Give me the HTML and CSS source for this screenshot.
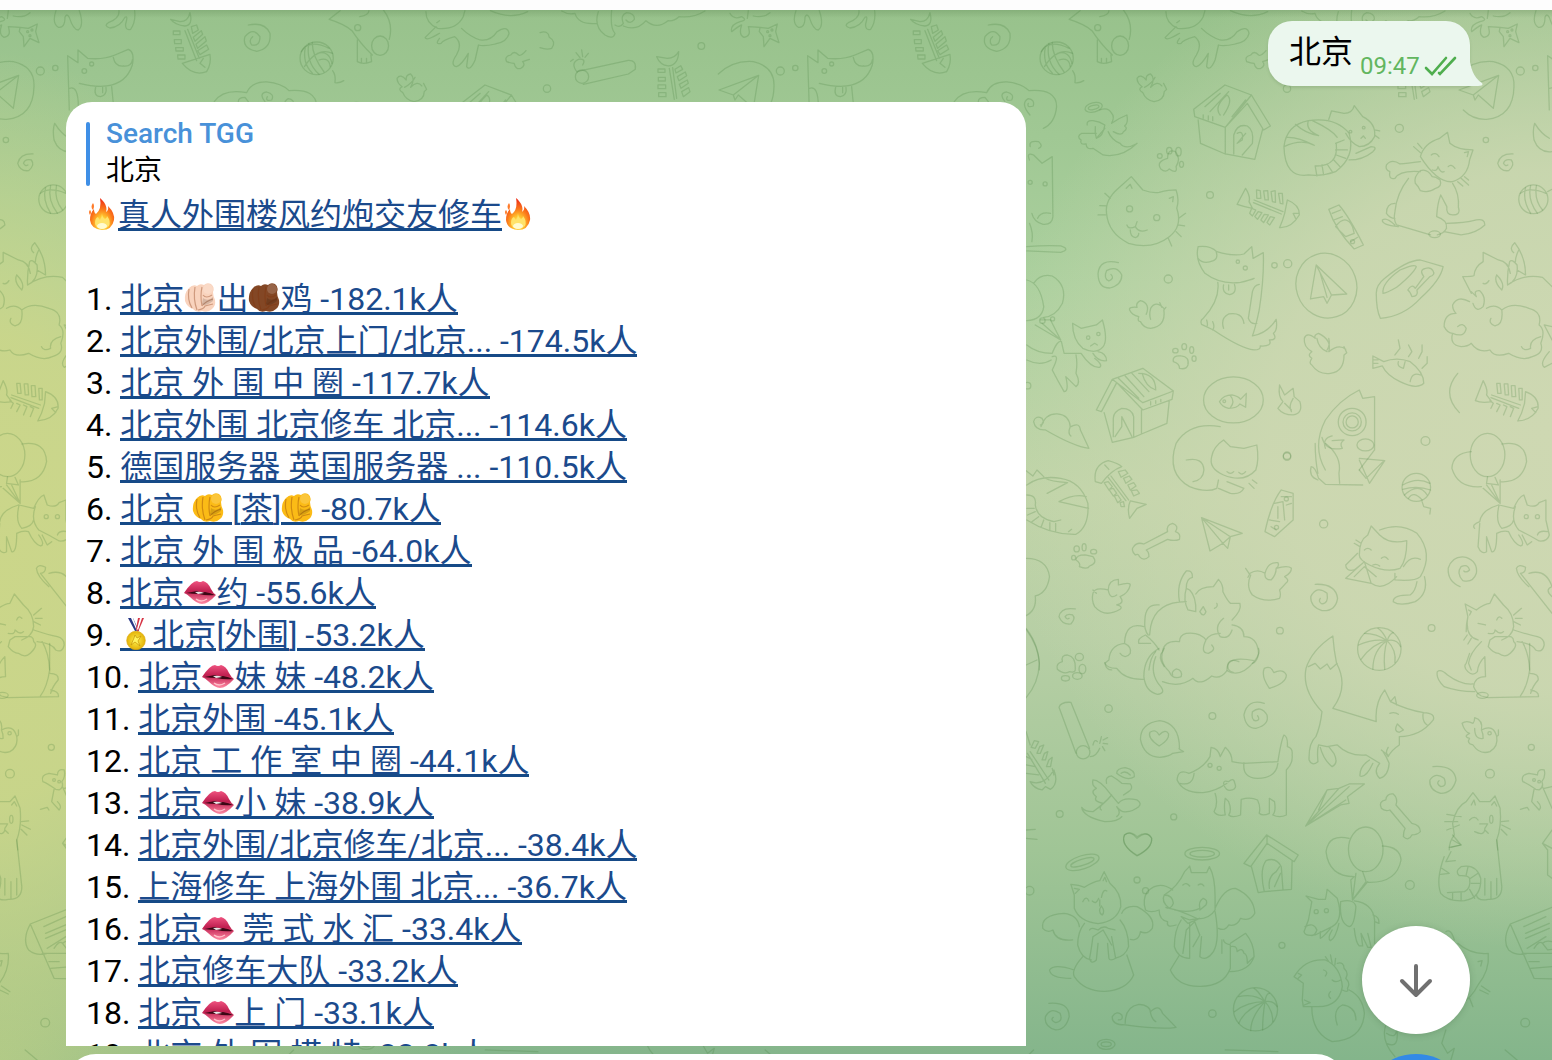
FILE: index.html
```html
<!DOCTYPE html>
<html lang="zh-CN">
<head>
<meta charset="utf-8">
<title>Search TGG</title>
<link rel="stylesheet" href="styles.css">
</head>
<body>
<svg class="defs" width="0" height="0" aria-hidden="true">
  <defs>
    <radialGradient id="gFire" cx=".5" cy=".8" r=".75"><stop offset="0" stop-color="#fff3a0"/><stop offset=".3" stop-color="#ffc52e"/><stop offset=".6" stop-color="#fb7a1b"/><stop offset="1" stop-color="#ee3016"/></radialGradient>
    <linearGradient id="gLip" x1="0" y1="0" x2="0" y2="1"><stop offset="0" stop-color="#ef5380"/><stop offset=".45" stop-color="#c01f50"/><stop offset="1" stop-color="#ff8ba4"/></linearGradient>
    <radialGradient id="gMedal"><stop offset="0" stop-color="#fff04c"/><stop offset="1" stop-color="#e3b208"/></radialGradient>
    <symbol id="fire" viewBox="0 0 32 32"><path fill="url(#gFire)" d="M14 0C21 6 21 11 20 14Q23 12 22 8Q29 15 28 22Q26 32 16 32Q5 31 4 22Q4 15 8 11Q8 15 10 16Q16 11 14 0Z"/><path fill="#ff7a28" d="M7 5Q9 8 7 12Q4 9 7 5ZM4 12Q6 14 4 17Q2 14 4 12Z"/><path fill="#ffe36a" d="M16 15Q16 19 19 21Q21 20 21 18Q25 23 23 28Q20 31 16 31Q9 30 9 25Q9 20 12 19Q13 21 14 22Q16 19 16 15Z"/><ellipse cx="16" cy="28" rx="5" ry="3" fill="#fffbd0"/></symbol>
    <symbol id="fist" viewBox="0 0 32 32"><path fill="currentColor" d="M5 6Q9 2 13 4Q16 1 20 3Q23 0 27 2Q31 5 29 10Q29 14 31 18Q32 24 28 27Q24 31 18 29Q12 31 9 27Q3 25 1 19Q0 11 5 6Z"/><path class="fist-line" d="M5 7Q3 18 8 26M11 5Q9 17 13 28M18 5Q16 14 18 24M19 13Q22 17 28 13M18 24Q22 19 29 17M14 28Q20 27 21 24L29 22"/><circle cx="24" cy="7" r="5" fill="#fff" opacity=".16"/><path d="M19 16Q24 20 29 15V19Q21 25 18 22Z" opacity=".14"/></symbol>
    <symbol id="lips" viewBox="0 0 32 32"><path fill="url(#gLip)" d="M0 17Q8 5 13 5Q16 7 19 5Q24 6 27 13Q29 17 32 19Q24 28 18 28Q13 28 6 21Q3 18 0 17Z"/><path fill="#3c0715" d="M2 17Q8 16 13 15Q17 17 21 16Q27 17 31 19Q22 20 15 18Q9 18 2 17Z"/><path fill="#fff" opacity=".9" d="M11 16Q16 15 20 17L14 18Z"/><path d="M12 23Q17 27 23 23" stroke="#ffc1ca" fill="none" stroke-width="1.5"/></symbol>
    <symbol id="medal" viewBox="0 0 32 32"><path fill="#273786" d="M8 0H13L19 13H15Z"/><path fill="#fff" d="M11 0H13L18 13H17Z"/><path fill="#d63445" d="M18 0L16 11L18 14L24 0Z"/><path fill="#fff" d="M20 0L17 11L18 12L22 0Z"/><circle cx="16" cy="22.500" r="9.300" fill="url(#gMedal)" stroke="#dca90b" stroke-width=".7"/><path d="M11 27L14 20L15 17L17 20L21 18L18 23L20 28L15 24Z" fill="#fff35c" stroke="#c69207" stroke-width=".7"/></symbol>

    <!-- pattern row that also continues past the right end of the tile -->
    <g id="tileHead" transform="translate(540 0) scale(.3333)">
      <path d="M570 40Q580 60 605 50Q625 60 600 65Q570 75 575 95Q600 75 605 75Q595 105 612 112Q635 110 625 80L660 82M625 32L622 55M690 38Q670 55 640 48M660 82L685 85L712 72L707 95L717 128L690 115L672 140L670 110L658 95Z"/>
      <circle cx="683" cy="95" r="3"/><circle cx="696" cy="90" r="3"/><circle cx="690" cy="107" r="3"/>
      <path d="M768 32Q755 70 775 82Q795 85 795 52Q800 38 808 52Q820 90 835 90Q850 80 842 45L838 32M957 32Q960 55 925 68Q910 78 930 84Q960 82 975 52Q985 45 977 72Q975 92 992 88Q1008 65 1004 32"/>
      <path d="M535 222Q580 180 640 185Q705 200 702 260Q700 350 620 358Q580 360 550 330M537 270L656 226L640 325L595 285L585 300L580 285ZM656 226L580 285"/>
      <circle cx="721" cy="213" r="12"/><circle cx="766" cy="204" r="8"/>
      <path d="M808 330L803 167L834 188V150L863 175Q910 180 945 165L985 148Q1005 155 997 195Q980 250 920 258Q885 262 838 250M940 172Q945 200 970 198Q995 200 997 180M887 262Q880 290 902 290Q922 285 918 262M908 262V278M808 265Q835 255 835 320M935 260L942 330"/>
      <circle cx="875" cy="192" r="6"/><circle cx="853" cy="213" r="7"/>
      <path d="M1112 58L1140 65Q1165 65 1170 38Q1180 75 1155 78Q1125 75 1112 58ZM1155 92L1190 182M1163 88L1198 175M1120 93H1140V104H1120ZM1123 119H1144V131H1124ZM1127 143H1150V153H1128ZM1133 165H1155V177H1134ZM1174 80L1190 75L1195 90L1178 100ZM1180 112L1204 92L1208 103L1185 124ZM1188 133L1215 110L1219 123L1193 145ZM1193 152L1220 135L1226 148L1200 164ZM1147 190L1230 163Q1235 190 1220 215Q1180 230 1147 190M1210 175L1200 190L1215 202"/>
      <path d="M1345 75Q1395 65 1410 100Q1415 145 1370 154Q1325 145 1335 110Q1360 80 1380 110Q1380 140 1355 135Q1345 120 1358 110"/>
      <path d="M1243 305Q1270 265 1340 278Q1355 245 1400 246Q1445 250 1467 272Q1550 265 1550 320Q1545 370 1510 385M1395 305Q1375 280 1400 276Q1425 282 1415 300Q1395 305 1402 290M1470 345Q1440 310 1465 296Q1485 298 1480 318Q1460 325 1465 310M1315 305Q1315 292 1335 292L1345 305"/>
    </g>

    <g id="tile">
      <use href="#tileHead"/>
      <g transform="translate(1280 0) scale(.3333)">
        <path d="M65 33Q85 45 105 40Q115 75 170 70M175 35Q160 80 195 105Q220 120 225 100Q210 85 215 30M225 75Q240 85 250 70Q240 45 260 38Q285 40 283 58Q270 75 258 60M250 78Q290 95 318 62Q350 90 384 62Q400 65 417 50Q460 55 495 33"/>
        <path d="M0 98Q25 90 28 112Q50 125 35 145Q20 150 0 143"/>
        <circle cx="21" cy="266" r="11"/><circle cx="484" cy="138" r="10"/>
        <circle cx="126" cy="230" r="20"/><path d="M110 215L265 181Q290 180 286 208L265 222L130 253M112 217Q90 190 115 178Q140 175 128 195M120 173L108 158M128 170L125 150M135 172L145 160M100 178L92 184"/>
        <path d="M350 170L382 175Q405 175 416 155Q415 195 385 198Q360 195 350 170ZM388 205L403 298M398 203L410 295M354 207H375V217H354ZM355 232H376V243H355ZM354 255H377V266H354ZM356 278H378V290H356ZM405 208L422 197L428 208L408 219ZM412 230L436 216L440 227L417 242ZM418 253L442 240L445 250L423 265ZM425 275L446 263L450 275L430 290Z"/>
      </g>

      <g transform="translate(1020 0) scale(.3393 .3333)">
        <path d="M177 32L145 58Q190 72 212 92Q240 135 272 165M262 32Q262 45 235 50M305 30Q335 70 322 118M228 120V185Q245 195 270 185L268 165M240 188V175M255 190V175"/>
        <ellipse cx="295" cy="137" rx="25" ry="29"/><circle cx="229" cy="83" r="9"/>
        <circle cx="108" cy="175" r="49"/><path d="M75 140Q65 190 95 219M85 130Q75 185 115 223M95 127Q95 170 130 216M63 155Q85 115 145 145M72 200Q110 140 155 160M110 160Q145 150 153 190M115 180Q145 170 148 200M155 212Q165 225 162 248Q175 250 188 242"/>
        <path d="M430 35Q430 70 465 85Q520 90 540 50L545 32M535 85Q560 110 590 120Q620 125 640 95Q670 75 675 100Q670 125 635 132Q600 140 585 135L575 180Q560 215 550 200L555 160Q535 195 520 200Q500 195 520 165Q540 130 515 110Q480 120 475 130Q455 135 470 115M460 80Q430 110 428 112Q430 125 470 100M620 32Q680 60 730 35M470 62L462 68"/>
        <path d="M725 152Q710 170 703 165Q690 150 680 165Q660 170 668 185Q680 190 690 190Q695 210 710 205Q725 195 715 185L735 178"/>
        <path d="M418 258Q405 240 385 262Q400 235 385 222Q370 225 372 240Q355 220 345 235Q345 250 360 260Q345 268 362 278Q370 300 395 305Q425 300 425 275L432 268L423 250M367 262Q390 250 398 232"/>
        <ellipse cx="217" cy="322" rx="26" ry="14" transform="rotate(-14 217 322)"/><ellipse cx="217" cy="322" rx="16" ry="6" transform="rotate(-14 217 322)"/>
        <path d="M235 330Q260 320 270 340Q280 350 270 370Q290 355 315 345Q320 370 308 378Q320 385 305 395Q300 410 275 395M198 375Q195 360 215 362Q235 365 250 375Q245 410 225 415Q220 400 222 380M225 400Q200 400 182 400Q165 410 180 420Q175 435 195 432Q195 450 215 445L245 465Q300 475 345 430M260 395Q270 420 295 430Q310 450 342 432M225 415L250 385"/>
        <path d="M512 328L604 255L682 285L738 378L718 390L670 310L605 382L515 350ZM605 382L682 285M525 360L532 430L605 462V382M605 462L692 478L715 388M630 462V405Q640 370 670 378Q690 390 685 430L655 465M545 320L590 280M560 335L615 275M590 345Q570 320 610 285Q630 300 600 345M625 350L665 300M640 400Q660 390 655 420L640 430L665 400M540 345V355M555 348V360M568 350V362"/>
        <path d="M458 455Q435 445 435 475Q400 485 415 507Q430 520 440 507Q465 525 460 500Q475 475 458 455Z"/><ellipse cx="440" cy="452" rx="8" ry="10"/><ellipse cx="467" cy="455" rx="8" ry="13"/><ellipse cx="412" cy="468" rx="7" ry="7"/><ellipse cx="476" cy="493" rx="6" ry="9"/>
        <path d="M850 525Q780 535 778 440Q785 375 850 362Q930 350 970 400Q990 470 930 515Q890 530 850 525M812 373Q840 400 880 407Q840 390 850 362M778 440Q830 415 867 436M785 412Q820 410 867 436M862 362Q920 390 935 412M910 358L918 333L955 340Q980 340 985 317L1010 350Q1050 370 1045 410Q1030 440 1000 440Q975 430 960 400M870 498L875 528M890 495L895 525M905 492L920 515M925 480L945 502M932 465L960 475M930 450L965 450M930 430L955 420M870 498Q940 500 932 430M970 480Q1010 480 1040 455Q1055 440 1035 440L990 460M1045 390L1060 393M1045 405L1058 415M1005 415L1012 408L1018 415"/><circle cx="974" cy="395" r="4"/><circle cx="1013" cy="383" r="4"/>
        <circle cx="1118" cy="385" r="12"/><circle cx="560" cy="585" r="10"/><circle cx="1373" cy="420" r="8"/>
        <path d="M255 640Q250 600 290 565L328 530L362 570Q390 580 410 577Q440 570 460 570Q470 600 462 625Q480 680 440 710Q390 750 320 730Q260 700 255 640M313 565L325 553L330 565M440 595L452 590L450 605M315 675Q320 690 340 680Q350 700 375 690M345 665L340 680M325 690Q325 710 340 713Q350 710 350 700M250 580L266 595M235 617L255 618M230 645L252 645M468 655L488 640M465 675L485 678M460 695L475 710M437 715L447 738"/><circle cx="323" cy="627" r="9"/><circle cx="403" cy="653" r="9"/>
        <path d="M640 613L665 565Q680 590 675 605L685 625Q660 620 640 613M690 600L775 635M688 608L770 642M697 570L708 572L710 595L698 595ZM718 573L730 572L732 600L722 600ZM740 575L752 572L753 607L744 605ZM762 580L773 580L775 612L767 610ZM683 625L695 630L685 648L677 640ZM702 635L713 638L700 658L692 650ZM720 643L732 645L718 668L710 660ZM738 650L750 653L736 675L728 668ZM788 600Q825 615 823 645Q800 685 765 683Q775 660 780 640ZM823 640L805 640L812 655"/>
        <path d="M910 628L940 615Q970 650 1012 735L985 747Q930 690 910 628M920 640L945 630M925 660L950 650M930 680Q960 640 980 680L985 700L960 710ZM975 725L995 712"/><circle cx="980" cy="725" r="6"/>
        <path d="M1180 470Q1190 430 1237 415L1260 397L1267 430Q1290 450 1335 450L1325 480Q1320 530 1275 545Q1230 550 1180 470M1180 485Q1140 490 1120 492Q1095 475 1080 495Q1075 510 1090 515Q1085 540 1105 535Q1120 510 1180 515M1180 512Q1160 530 1165 550Q1175 560 1180 572Q1205 580 1225 565Q1245 560 1238 540Q1225 530 1215 530Q1200 505 1180 512M1145 535Q1110 580 1105 635Q1100 660 1110 675L1210 705M1105 610Q1080 610 1080 640Q1090 655 1105 655M1105 675Q1080 650 1068 660Q1065 675 1115 680M1275 550Q1295 580 1292 622Q1300 645 1275 645Q1255 645 1258 620L1240 585M1240 585Q1230 610 1228 650Q1260 660 1257 685Q1250 700 1230 705M1257 670Q1310 670 1345 660Q1370 655 1370 675Q1345 700 1300 705L1250 695M1212 465Q1225 455 1235 470M1262 500Q1270 490 1282 505M1215 510Q1230 515 1232 500Q1240 520 1250 515M1160 440L1180 458M1172 430L1185 445M1300 535L1322 555M1310 530L1322 540M1290 545L1305 558M1310 458L1322 455L1318 470"/><ellipse cx="1222" cy="703" rx="17" ry="10"/>
        <path d="M1453 462Q1415 460 1408 490Q1415 515 1440 512Q1460 495 1448 480Q1430 475 1425 490Q1430 500 1438 495"/>
        <path d="M1568 455Q1530 460 1515 420Q1510 390 1517 370Q1535 400 1560 415"/>
        <circle cx="1513" cy="598" r="43"/><path d="M1490 563Q1480 600 1505 640M1505 557Q1495 600 1525 640M1522 557Q1515 600 1540 630M1475 580Q1500 560 1550 580M1555 575L1568 568"/>
        <path d="M28 480Q18 455 40 465L65 490L95 470L97 650Q95 675 68 673Q40 665 35 640M52 655Q60 635 90 640M28 670Q40 700 35 725M20 740Q80 735 120 738Q150 748 120 757L20 753M30 440Q25 420 55 425Q70 440 55 445"/><circle cx="30" cy="547" r="6"/><circle cx="74" cy="552" r="6"/>
      </g>

      <g transform="translate(1020 230) scale(.3393 .3333)">
        <path d="M290 98Q235 85 230 130Q230 175 265 174Q300 165 300 135Q285 105 255 122Q245 145 262 153Q280 145 268 133"/>
        <circle cx="437" cy="147" r="12"/><circle cx="750" cy="106" r="8"/><circle cx="789" cy="101" r="12"/><circle cx="22" cy="467" r="10"/><circle cx="1195" cy="633" r="13"/><circle cx="787" cy="680" r="11"/>
        <path d="M424 235Q400 210 385 235Q380 255 385 268M372 253Q385 220 355 212Q340 220 345 232Q320 230 323 240Q330 255 350 260Q345 275 355 275Q365 295 385 295Q430 290 424 240L430 232M412 218L418 232"/>
        <path d="M525 50Q560 45 580 65Q630 80 660 72L683 50L687 85L717 68Q720 140 705 240Q695 290 685 318Q730 310 755 268Q760 300 747 310Q760 330 735 330Q745 350 708 348Q710 360 690 360Q650 355 570 300L535 283Q530 270 540 265Q590 210 583 157M525 50Q515 90 545 130Q590 165 650 157Q680 150 690 145M525 85Q540 105 570 92Q585 85 578 65M705 163Q690 165 685 185L673 265Q680 285 698 280M660 280Q655 245 615 252Q590 265 600 295M550 270Q555 285 550 290M568 275Q575 290 568 300M600 165Q595 190 618 194Q640 190 632 163M615 165V180"/><circle cx="642" cy="95" r="5"/><circle cx="664" cy="114" r="6"/>
        <ellipse cx="903" cy="167" rx="89" ry="98" transform="rotate(-18 903 167)"/><path d="M873 105L963 192L918 195L905 220L895 200L856 207ZM873 105L918 195M885 130L905 202"/>
        <path d="M1050 190Q1050 165 1075 145Q1140 90 1180 90L1247 110Q1240 150 1180 205Q1130 260 1062 265Q1050 240 1050 190M1070 190Q1065 160 1120 120Q1165 100 1168 110Q1160 130 1110 172Q1080 190 1070 190M1190 140Q1175 120 1195 115Q1210 110 1217 122Q1225 135 1208 140L1170 180Q1175 200 1155 200Q1150 185 1143 180Q1155 160 1165 175Z"/>
        <path d="M1330 190L1305 140Q1335 140 1338 137Q1340 110 1365 95V67L1410 90Q1440 95 1445 130M1330 185L1345 200Q1335 180 1355 182Q1375 200 1365 230Q1345 250 1335 220M1443 95Q1435 130 1437 165Q1470 150 1465 105Q1450 85 1443 95M1465 120L1490 135Q1490 80 1458 38Q1440 55 1455 68M1470 60Q1460 80 1460 95M1437 165Q1485 130 1540 142L1568 170M1365 160Q1375 165 1382 152M1405 135Q1395 155 1420 180Q1430 160 1405 135M1325 215Q1290 195 1275 225Q1275 240 1285 250Q1250 250 1250 290Q1260 310 1275 310Q1265 345 1300 350Q1320 350 1330 340Q1350 370 1385 360Q1400 385 1440 370Q1480 395 1510 380Q1545 370 1535 340Q1550 300 1530 285Q1540 245 1500 235Q1450 215 1420 240Q1400 220 1375 235M1420 240Q1425 285 1400 288Q1380 280 1388 265M1275 310Q1310 325 1315 295Q1305 275 1290 290M1535 320Q1500 330 1505 355Q1485 365 1478 350M1568 290L1545 285L1568 330M1560 365Q1530 400 1545 412L1568 400"/>
        <path d="M20 150Q60 160 70 230Q65 270 20 272M40 160Q60 130 95 138Q140 165 125 220Q105 260 70 262M60 270L90 270M45 285L120 330M65 280L120 330M90 270L120 330M20 345Q50 370 95 370Q110 330 122 335L130 370Q150 370 180 370Q210 415 235 412Q245 405 220 385M215 370Q230 395 255 392Q255 370 230 365M155 280L180 295L225 285L243 270Q260 330 245 350Q225 375 185 355Q155 330 155 280M95 380Q120 370 95 420Q110 450 130 485Q145 485 135 440L165 470Q180 460 165 430Q170 400 165 375M20 390Q60 410 92 390M208 348L220 340L228 345"/><circle cx="201" cy="323" r="5"/><circle cx="231" cy="312" r="5"/><circle cx="66" cy="272" r="8"/><circle cx="96" cy="267" r="6"/>
        <path d="M475 378Q448 375 452 395Q470 400 470 415Q490 420 495 405Q500 380 475 378Z"/><ellipse cx="484" cy="350" rx="7" ry="9"/><ellipse cx="506" cy="360" rx="6" ry="10"/><ellipse cx="458" cy="362" rx="8" ry="7"/><ellipse cx="513" cy="386" rx="6" ry="8"/>
        <path d="M225 540L272 448L362 415L452 483L448 508L362 540L285 458L240 545ZM452 483L362 518L272 448M248 548L272 637L335 622V560Q330 535 300 535Q275 545 275 565V620M358 540V612L433 580L440 512M358 612L335 622M290 445L350 505M310 438L365 500M330 430L380 485M350 430Q400 430 400 480Q370 470 360 430M385 515V525M400 512V520M415 508V515M280 620L300 590V560L315 590L330 620"/>
        <ellipse cx="629" cy="510" rx="88" ry="69"/><path d="M588 515Q600 495 625 495Q645 500 650 508L667 490L665 532L648 522Q640 535 615 535Q595 530 588 515M620 497Q635 515 620 533"/><circle cx="602" cy="514" r="4"/>
        <path d="M765 465L780 495L805 475L808 500L825 515Q835 550 805 555Q775 555 760 535L775 515Q760 500 765 465M780 520L800 540M805 505Q790 530 800 545"/>
        <path d="M960 358Q940 340 910 365Q920 330 880 310Q865 315 870 325Q845 305 838 325Q835 350 860 365Q845 375 860 385Q850 400 860 405Q880 435 915 430Q955 425 955 375L963 368L955 350M875 325Q880 355 905 365M910 325Q915 345 905 360"/>
        <path d="M1040 378L1072 395Q1110 380 1150 395Q1190 425 1190 460Q1170 480 1120 455Q1080 435 1068 408L1040 415ZM1040 390H1055M1040 400H1055M1115 395Q1110 410 1130 415L1135 395M1150 455Q1155 425 1180 435M1105 375L1120 355L1115 330M1145 380L1155 365L1145 345M1175 385L1185 365V345M1185 415L1200 400V380"/>
        <path d="M1290 430Q1240 490 1295 548M1342 512L1365 452Q1380 480 1375 495L1390 515Q1360 520 1342 512M1390 495L1475 525M1388 503L1470 535M1405 460H1415L1418 490H1408ZM1427 462H1438L1440 495H1430ZM1448 467H1459L1461 500H1450ZM1470 475H1480V510H1472ZM1385 512L1395 520L1388 535M1405 520L1415 525L1405 545M1425 525L1435 530L1425 555M1445 530L1455 535L1445 560M1490 485Q1530 500 1527 535Q1510 570 1467 573Q1480 550 1487 520ZM1527 530L1508 535L1520 548"/>
        <path d="M62 590Q75 550 110 552Q145 555 148 590Q140 610 150 618M150 590Q175 575 178 600L203 655Q160 650 75 600Q70 600 70 600Q45 600 40 575Q45 555 65 565Q75 580 60 585"/>
        <path d="M900 720Q860 650 900 570Q940 510 1000 480L1010 505L1045 500V660M890 622Q900 665 950 655Q940 640 955 630L920 632M1000 720L1045 660M900 655Q890 625 920 618"/><circle cx="979" cy="576" r="41"/><circle cx="979" cy="576" r="27"/><circle cx="979" cy="576" r="18"/><ellipse cx="1018" cy="645" rx="25" ry="18"/>
      </g>

      <g transform="translate(1020 440) scale(.3393 .3333)">
        <path d="M18 92L38 108L50 90L70 110M20 135Q60 105 120 115Q180 125 200 190Q205 260 165 283Q90 285 20 240M80 160L140 128Q90 125 75 115M115 185Q160 160 195 170M115 185L202 205M20 165Q50 165 45 195Q50 235 100 245L120 240M20 205H42M22 225L45 215M35 245L55 230M62 262L70 240M88 272V248M105 275V250M143 275L152 268"/>
        <path d="M222 125Q215 75 260 62Q290 70 300 80Q270 90 240 130ZM250 75L262 88M268 108L320 180M260 112L312 182M248 128L260 125L272 140L262 150ZM262 148L275 145L285 160L275 168ZM278 168L288 165L298 180L288 188ZM295 188L305 185L308 200L298 200ZM290 95L310 90L318 100L298 112ZM305 115L322 108L330 118L312 130ZM318 135L335 128L342 138L325 150ZM328 152L345 150L352 160L335 168ZM325 183L372 193L345 205L323 235Q315 205 325 183"/>
        <path d="M565 50Q570 20 600 0L620 20L660 25L698 15Q705 60 695 90Q660 130 600 105Q555 85 565 50M590 -40Q500 -55 460 10Q430 100 500 140Q550 160 580 145L585 120M490 60Q540 50 542 90Q540 120 510 125M585 145L620 160Q650 165 660 145L610 125M610 95Q620 105 630 95M645 97Q655 108 665 95M675 130L690 145M685 120L698 130"/>
        <circle cx="787" cy="47" r="11"/><circle cx="895" cy="252" r="12"/><circle cx="766" cy="572" r="10"/><circle cx="1213" cy="564" r="10"/>
        <path d="M900 10Q950 50 940 100L942 130M870 10Q870 60 878 100M878 120Q850 110 858 80Q870 80 880 115L900 133L1010 135M1000 55L1075 62L1030 130L1000 60M1000 90L1020 115L1070 65"/>
        <path d="M335 320Q325 330 340 345Q350 340 352 350Q365 365 380 350Q380 335 372 330L435 298Q455 305 470 298Q475 280 458 275Q470 258 450 250Q430 255 435 275L365 312Q345 305 335 320Z"/>
        <path d="M535 233L655 280L620 290L612 325L598 310L560 333ZM535 233L598 310M620 290L535 233M598 310Q620 290 620 290"/>
        <path d="M770 150L805 160L805 240L750 290L722 275Q740 190 770 150M750 190L775 185L780 240M760 200V235M785 195L800 190M770 170H800M740 260L755 270M735 240L765 245"/><circle cx="785" cy="177" r="6"/><circle cx="756" cy="262" r="6"/>
        <path d="M192 345Q165 345 165 360Q180 370 175 380Q200 390 205 378Q230 370 215 350Z"/><ellipse cx="189" cy="322" rx="6" ry="11"/><ellipse cx="167" cy="327" rx="8" ry="9"/><ellipse cx="158" cy="353" rx="6" ry="7"/><ellipse cx="217" cy="335" rx="9" ry="7"/>
        <circle cx="1168" cy="142" r="42"/><path d="M1128 135Q1170 110 1208 130M1128 148Q1170 135 1210 150M1133 165Q1175 125 1200 165M1145 175Q1160 150 1185 180M1185 185L1190 200L1210 205L1208 222"/>
        <ellipse cx="1378" cy="45" rx="51" ry="65"/><path d="M1330 35Q1275 40 1273 85Q1290 145 1360 140M1420 12Q1490 0 1493 65Q1480 130 1415 125M1378 110L1375 130L1410 135L1400 112M1375 135L1415 190M1390 135L1415 190M1415 120L1415 190L1365 145"/>
        <path d="M1410 195Q1360 210 1355 245Q1330 255 1340 265M1355 250L1350 320Q1360 345 1375 335L1375 290L1390 335Q1405 340 1405 280Q1425 270 1440 275Q1455 310 1475 318Q1490 315 1470 285M1412 195Q1400 245 1420 265Q1450 260 1455 240M1412 195L1455 205Q1470 170 1485 165L1495 195Q1520 205 1530 188L1550 180V240L1560 285Q1555 305 1530 303Q1500 285 1470 270Q1445 240 1460 200M1525 285Q1530 270 1555 275M1480 285L1495 315L1508 305"/><circle cx="1492" cy="230" r="6"/><circle cx="1525" cy="230" r="6"/>
        <path d="M1000 345Q1000 300 1025 285L1035 258L1060 285Q1090 315 1140 302Q1140 360 1120 385Q1080 400 1030 375Q1000 360 1000 345M1060 270Q1120 245 1170 280Q1220 340 1180 410Q1165 425 1105 420M1130 380Q1150 345 1180 358M1192 410Q1205 460 1165 485Q1120 500 1100 485Q1100 465 1150 465Q1165 455 1170 425M995 340L960 375Q960 395 985 390L1010 370M960 415L1015 365L1035 430ZM985 410L1015 380L1050 410M1035 430Q1070 455 1110 410M1105 420L1105 400M1015 330Q1025 320 1035 330M1065 355Q1075 345 1085 358M1040 375Q1050 370 1060 378M985 310L1002 320M990 300L1005 310"/>
        <path d="M1297 440Q1260 425 1262 385Q1275 345 1315 352Q1350 365 1345 400Q1335 430 1305 422Q1285 400 1300 380Q1320 370 1325 390Q1315 400 1308 393"/>
        <path d="M870 433Q930 430 936 475Q930 515 890 512Q855 500 857 470Q875 435 905 460Q910 490 890 492Q878 485 885 475"/>
        <path d="M163 507Q120 500 115 530Q125 555 150 552Q165 535 155 525Q138 520 133 530Q138 540 145 535"/>
        <path d="M672 412L678 400Q700 385 722 400Q730 365 760 368Q765 378 755 385Q790 375 800 385Q800 400 780 410Q795 420 785 428Q775 440 765 450Q770 465 765 475Q720 490 685 465Q665 440 680 405M722 400Q720 420 740 420Q755 405 755 385M665 385L675 400"/>
        <path d="M215 460Q220 440 260 450Q260 420 290 418L290 435Q325 425 325 435Q320 460 295 470Q310 490 285 495Q305 500 295 508Q250 535 220 500Q210 480 215 460M260 450Q265 480 285 465M215 450L225 460"/>
        <path d="M18 355Q80 355 87 410Q80 460 45 468Q50 510 18 527M18 565Q60 620 57 690"/>
        <path d="M470 485Q460 430 490 393Q510 390 508 412Q490 415 490 445M490 445Q480 480 495 510L518 515Q520 470 500 450ZM518 462Q530 440 570 440L585 418Q600 435 598 455Q610 480 620 490L648 490Q655 510 625 540M490 485Q400 485 385 560L382 585M410 495Q370 490 368 540Q365 570 378 585M540 500L530 515Q540 535 548 515ZM573 505Q585 500 580 490M600 535Q570 560 590 590Q615 600 625 570M590 580Q560 580 548 600Q530 575 490 580Q470 585 470 605Q425 600 420 635Q405 650 425 680M548 600Q530 640 555 640Q580 630 565 615M625 555Q660 560 660 590Q700 590 703 640Q700 665 685 670M645 665Q610 650 610 690M385 610L350 610Q345 595 370 585Q395 605 410 630M365 560Q310 545 308 610Q330 620 325 640Q310 660 295 640M308 610Q265 615 262 660L250 670Q255 690 270 690M380 690Q385 650 400 635"/>
        <path d="M1463 385Q1470 370 1490 382Q1490 400 1475 400M1475 400L1568 520M1463 385Q1465 410 1500 440M1500 400Q1550 385 1568 440M1568 440Q1545 450 1568 470"/>
        <path d="M1315 575Q1315 550 1320 530L1312 492L1345 510Q1370 490 1385 490L1398 462L1425 495Q1455 520 1455 560Q1450 590 1420 600M1320 530Q1310 590 1350 600M1400 590L1385 600L1380 620Q1395 640 1410 640Q1430 655 1445 640Q1470 615 1455 605Q1455 585 1430 590ZM1360 605Q1325 640 1322 670L1330 690M1455 570Q1500 585 1525 590Q1545 595 1545 615Q1540 640 1520 630Q1510 610 1465 605M1480 605Q1500 640 1502 690M1350 550L1372 555M1405 540Q1410 525 1420 535M1380 580Q1400 585 1400 570Q1415 585 1425 575M1455 525L1478 505M1460 535H1480M1455 545L1475 555M1318 585L1308 600M1330 595L1320 612M1322 510L1330 515L1325 525"/>
      </g>

      <g transform="translate(1020 620) scale(.3393 .3333)">
        <path d="M18 28Q55 80 57 130Q55 190 18 233M18 135L50 120"/>
        <path d="M140 105Q120 105 125 125Q105 130 110 148Q130 165 145 155Q165 160 163 145Q165 110 140 105Z"/><ellipse cx="175" cy="111" rx="12" ry="11"/><ellipse cx="184" cy="147" rx="10" ry="14"/><ellipse cx="169" cy="168" rx="14" ry="10"/><ellipse cx="134" cy="175" rx="12" ry="8"/>
        <path d="M250 128Q255 145 285 145Q310 180 365 178M410 85Q365 110 365 170Q370 215 405 223Q430 220 415 200Q380 160 400 110M425 85Q405 120 440 155Q450 180 475 170Q480 150 460 147Q445 155 450 165M420 185Q470 205 510 175Q530 200 565 168Q590 180 610 152Q650 175 690 125Q710 100 703 85M690 122Q630 110 615 130Q605 150 630 158"/>
        <path d="M735 205Q710 170 720 145Q740 135 748 158Q775 145 785 165Q785 190 735 205Z"/>
        <circle cx="261" cy="266" r="11"/><circle cx="567" cy="288" r="10"/><circle cx="117" cy="582" r="10"/><circle cx="453" cy="591" r="9"/><circle cx="1385" cy="461" r="13"/><circle cx="1507" cy="382" r="9"/>
        <path d="M720 250Q670 235 660 285Q665 325 695 325Q735 315 728 285Q710 255 685 275Q680 300 695 303Q710 300 700 287"/>
        <path d="M115 262Q120 245 150 247L205 385M115 262L165 400"/><circle cx="186" cy="397" r="20"/><path d="M207 410Q225 410 235 385M215 375Q220 355 228 365M240 350L235 370M245 360L258 353M245 370L258 372M243 380L250 392"/>
        <path d="M470 385Q470 310 412 302Q355 310 355 358Q365 410 412 412Q440 410 450 400L482 395Q465 385 470 385M410 378Q375 355 383 337Q400 325 410 345Q430 325 438 342Q440 360 410 378Z"/>
        <circle cx="1059" cy="87" r="64"/><path d="M1082 62Q1050 40 1015 40M1082 62Q1040 55 998 75M1082 62Q1040 70 1005 118M1082 62Q1040 90 1040 148M1082 62Q1070 100 1075 148M1082 62Q1110 90 1105 128M1082 62Q1110 55 1122 80M1082 62Q1090 40 1100 38M1082 62Q1070 35 1055 25"/>
        <path d="M890 275Q830 210 843 145Q860 90 922 48Q925 90 933 130Q970 200 922 265L1050 305Q1045 250 1075 210L1092 245Q1140 270 1190 278Q1225 280 1218 300Q1180 350 1118 350L1118 375Q1095 390 1085 410Q1080 400 1065 390M850 140L870 130L885 147L905 132L915 148L935 130M890 275Q885 320 872 350Q850 370 852 420Q860 440 878 425Q875 390 880 375L905 380Q935 375 935 375M885 382Q895 420 920 440Q940 430 925 400L910 380M935 375Q970 410 1020 405L1060 430Q1040 455 1060 475Q1085 470 1088 430Q1080 410 1070 395M1030 420Q1000 440 1002 468Q1020 475 1040 430M1092 245L1105 230L1110 255M1090 280Q1105 275 1115 283M1188 280Q1185 305 1200 315M1112 312Q1100 335 1118 337L1130 330ZM1085 382Q1075 400 1085 405"/>
        <path d="M498 460Q465 445 463 480Q480 520 540 518Q575 515 610 490M498 460Q540 445 560 410L563 382Q585 385 590 410L605 382Q625 400 625 425Q650 430 660 430L760 425Q770 360 778 345Q790 350 788 380Q805 385 802 405Q805 430 785 450V585Q765 595 745 585Q755 575 750 545L735 535V580Q715 590 705 580Q710 560 700 540Q680 530 652 538L650 585Q625 595 615 585Q625 570 615 545L605 535Q600 560 605 585Q580 590 572 575Q585 550 575 520M470 490Q510 500 513 460M660 428Q655 475 700 475Q755 475 760 430M600 490Q600 480 615 485Q630 470 633 490Q640 505 625 510Q605 515 600 490Z"/><circle cx="560" cy="436" r="6"/><circle cx="587" cy="445" r="6"/>
        <path d="M842 618L905 510L940 505L970 492H1015L965 530L970 550L945 555ZM842 618L940 505M842 618L970 500M842 618L960 540M905 510L880 570"/>
        <path d="M1065 565Q1055 545 1078 540Q1080 520 1100 522Q1115 535 1108 555L1155 610Q1180 615 1180 635Q1170 645 1155 645Q1145 665 1130 650Q1130 635 1135 625L1090 570Q1075 575 1065 565Z"/>
        <path d="M1217 440Q1280 435 1285 480Q1275 520 1240 520Q1205 510 1208 480Q1225 455 1250 475Q1260 500 1240 500Q1225 490 1235 482"/>
        <path d="M1405 350Q1395 310 1360 330Q1365 300 1340 293Q1340 305 1335 310Q1315 300 1303 310Q1310 335 1325 340Q1305 350 1325 355Q1315 370 1335 375Q1355 405 1385 395Q1410 380 1405 350L1410 345V330M1340 325Q1340 360 1365 355Q1365 340 1360 330"/><circle cx="1384" cy="340" r="5"/>
        <path d="M1230 155Q1240 145 1260 165Q1300 195 1335 192M1230 155Q1225 175 1250 200Q1290 215 1340 215M1370 110L1372 170Q1340 170 1337 200Q1345 220 1360 228L1380 233L1528 230Q1530 215 1505 210M1325 100L1315 130Q1305 140 1320 155Q1335 170 1348 155Q1350 130 1370 110M1502 70V160Q1530 160 1527 180Q1510 200 1505 220M1502 150Q1495 200 1475 228"/><ellipse cx="1363" cy="226" rx="17" ry="9"/>
        <path d="M1275 610Q1285 560 1315 545L1335 518L1355 545H1385L1400 528L1415 565Q1420 620 1405 660L1408 690M1275 610L1280 645Q1265 665 1265 690M1275 660L1300 675L1270 682M1325 600Q1340 585 1350 600M1355 612H1378L1370 625Q1370 650 1340 635M1370 630L1380 640M1330 555L1338 540L1342 555M1390 555L1398 545L1405 558M1258 583L1300 590M1252 605H1290M1258 630L1295 615M1418 605L1440 603M1420 615L1445 628M1418 628L1435 645"/><ellipse cx="1389" cy="598" rx="5" ry="12"/>
        <path d="M1482 485Q1475 465 1500 460L1525 465Q1525 445 1545 450Q1550 470 1538 485Q1545 500 1530 510L1520 508Q1495 490 1482 485M1515 508L1508 545L1530 570Q1540 560 1525 545M1540 500L1568 565M1475 568L1495 562L1500 570M1568 500L1545 505"/><circle cx="1515" cy="480" r="4"/><circle cx="1530" cy="485" r="4"/>
        <path d="M18 335L30 375M22 400L75 490M30 395L85 480M42 362L55 365L45 385L33 382ZM58 380L70 375L60 400L50 400ZM72 400L82 395L75 420L65 420ZM85 420L95 412L90 440L78 440ZM95 445L100 465M18 410L35 418M18 435L45 440M18 460L55 465M30 485Q70 500 100 450Q115 490 90 508L75 500L65 510Q40 505 30 485"/>
        <path d="M285 460Q285 445 310 443Q340 450 337 470Q315 485 285 460M298 460Q310 450 325 465M255 490Q250 470 270 468Q290 480 300 490L325 492Q335 505 320 515L305 525M215 480Q235 480 265 520L290 550Q305 530 345 540Q360 550 350 560Q330 575 315 575Q300 580 285 560M215 480Q210 495 225 505Q205 515 225 530Q215 545 245 550Q230 565 240 570M182 562Q190 575 215 575Q250 550 270 525M182 562Q185 590 250 605Q290 605 300 590M285 560Q300 580 285 590"/>
        <path d="M345 708Q295 675 308 645Q325 630 345 655Q375 630 388 655Q390 685 345 708Z"/>
      </g>

      <g transform="translate(1020 820) scale(.3393 .3333)">
        <ellipse cx="184" cy="127" rx="51" ry="20" transform="rotate(-18 184 127)"/><ellipse cx="184" cy="127" rx="36" ry="9" transform="rotate(-18 184 127)"/>
        <ellipse cx="537" cy="101" rx="51" ry="19"/><ellipse cx="537" cy="101" rx="36" ry="10"/>
        <path d="M160 225L150 193Q175 195 190 202Q215 185 235 182L248 155L265 190Q300 220 297 260Q285 305 230 311Q175 305 160 265ZM160 205L175 208L163 220M245 182L250 172L255 185M185 245Q195 225 203 243M240 232Q245 205 256 213M213 243Q225 255 232 235M235 240V258M240 258Q228 275 242 285Q252 275 240 258M190 310Q170 335 170 375Q180 415 210 420M175 320Q170 285 130 280Q60 285 67 325Q80 340 97 330Q105 365 155 360M295 300Q320 330 320 380Q310 410 280 415M300 280Q310 255 345 260Q400 290 390 325Q375 345 355 335Q350 365 325 358M205 330Q210 320 230 330Q245 315 260 325L280 330M215 350Q210 390 205 415Q210 435 225 420L230 370M215 350L245 330L270 375M270 350L282 415Q265 425 262 415L258 370M185 410Q150 450 160 470Q190 515 250 514Q315 510 335 465L315 405M160 450Q100 430 87 450Q90 475 150 475"/>
        <path d="M425 225Q465 200 485 155Q495 145 500 138L505 158H550L558 140Q575 170 575 230V270Q560 295 525 297Q470 270 440 265Q415 245 425 225Q450 225 452 250Q445 270 430 262M480 195Q490 185 500 198M525 195Q535 188 542 198M455 270Q500 280 530 265Q525 245 540 235Q555 240 548 255L530 270M450 210Q410 180 375 215Q360 240 370 270Q385 280 410 270Q410 300 435 305Q430 325 460 315M575 265Q600 205 635 205Q690 230 692 280Q680 305 650 295Q640 320 615 315Q605 335 585 325M475 290L500 300L530 295L495 310ZM455 380Q455 330 475 300M455 380Q465 415 500 415M480 400L490 330L515 305L530 345L510 380M500 415V310M575 275Q590 360 570 395Q550 425 530 410L535 350M470 405L443 450Q465 500 530 499Q600 500 620 445V375M620 375Q600 370 600 360M620 370L665 340Q690 370 690 410L670 430Q670 400 660 400Q655 380 640 395Q640 375 620 380M690 410Q675 455 618 455M595 360V400"/>
        <path d="M345 106Q295 75 308 45Q325 30 345 50Q375 30 388 55Q390 85 345 106Z"/>
        <circle cx="345" cy="180" r="9"/><circle cx="370" cy="212" r="9"/><circle cx="772" cy="376" r="9"/><circle cx="1149" cy="195" r="13"/><circle cx="567" cy="581" r="11"/><circle cx="1489" cy="608" r="13"/><circle cx="28" cy="212" r="13"/>
        <path d="M660 130L727 45L820 105L808 125L728 70L680 140ZM728 45V70M682 140L702 218L720 215L800 208L802 122M720 215Q705 150 725 122Q755 110 770 140L775 208M735 205Q730 170 755 155L765 140M750 200L768 160"/>
        <ellipse cx="1019" cy="88" rx="51" ry="67"/><path d="M970 55Q910 40 902 95Q910 170 985 170M1068 78Q1120 80 1123 120Q1110 190 1025 187M985 170L975 180L980 240M1010 155L1020 185L980 240L990 160M1025 185L980 240"/>
        <path d="M860 245L843 228L880 238L900 238Q905 215 905 208L935 235Q955 300 920 320L870 345Q840 350 837 335L850 300ZM840 320Q865 305 875 330Q870 345 860 347M945 245Q985 235 990 260Q985 320 970 320Q940 310 945 245M985 243Q1040 250 1045 300Q1045 340 1045 370M1040 285Q1060 290 1058 310L1045 305M985 325Q990 370 1000 378H1010L1005 340L1025 382H1035L1025 340M940 310Q930 355 915 362Q905 355 920 330M915 325Q895 350 885 355V335"/><circle cx="873" cy="275" r="6"/><circle cx="903" cy="272" r="6"/>
        <path d="M1275 45L1300 75L1265 82M1270 95L1255 125L1283 122M1243 145L1265 160L1240 163M1250 110Q1225 180 1240 220Q1260 245 1310 242Q1360 235 1358 175Q1345 130 1300 140Q1280 155 1295 167Q1320 165 1325 175Q1330 205 1310 215L1260 218M1405 60L1420 200Q1420 240 1380 238Q1350 245 1345 225M1370 175V225M1388 185V235M1405 175V225M1275 220V240M1300 218V242M1325 208L1340 235M1330 190H1358M1328 175L1350 160M1315 165L1320 142"/>
        <path d="M1568 262L1445 312Q1420 360 1440 390Q1465 410 1495 400M1445 312L1515 475L1568 477M1480 400H1568M1500 425H1530M1505 445L1568 440M1485 320L1550 290M1490 340L1560 310M1490 355L1560 325M1495 385L1550 350M1515 385Q1530 360 1540 370Q1550 360 1568 365M1540 370L1555 390L1568 388"/>
        <path d="M1568 30L1540 70L1555 90V165L1568 175M1540 70L1568 85"/>
        <path d="M1255 335Q1270 325 1280 360M1290 370Q1330 405 1380 400Q1385 450 1350 495Q1330 535 1300 550M1350 425L1362 422L1358 438M1355 510L1380 522M1360 498L1385 515M1325 535L1335 560"/>
        <path d="M808 470Q840 415 900 420Q945 440 950 500Q940 560 880 560H835L832 540L835 490ZM835 490Q815 475 808 470M820 460L830 465L820 475M838 540L855 548L838 555M900 410L910 425M915 405L920 430M930 415L928 435M935 430Q955 425 955 445Q970 460 960 475Q975 490 965 505Q970 520 950 510M895 450Q910 455 900 468M915 515Q905 525 915 535M945 480Q930 490 920 480M860 560Q860 640 920 665Q1010 660 1015 580Q1010 530 970 510M935 615Q920 570 950 555Q990 560 990 600"/>
        <circle cx="694" cy="568" r="65"/><path d="M722 545Q690 520 645 530M722 545Q670 545 632 575M722 545Q660 570 645 610M722 545Q680 590 680 632M722 545Q715 590 715 630M722 545Q745 570 745 605M722 545Q745 540 758 560M722 545Q725 520 735 520M722 545Q700 510 690 505"/>
        <path d="M85 550Q145 545 145 590Q135 630 105 630Q70 620 75 590Q90 560 118 580Q128 605 105 608Q88 600 98 592"/>
        <path d="M310 610Q310 560 350 553Q385 555 385 580Q390 600 400 605M385 575Q410 550 420 580L460 622Q420 630 310 615Q270 615 272 590Q285 570 300 585Q305 600 290 600"/>
        <ellipse cx="254" cy="673" rx="26" ry="15"/><ellipse cx="254" cy="673" rx="15" ry="7"/>
        <path d="M1080 610Q1060 660 1105 710M1080 640Q1110 660 1110 625Q1120 690 1080 670M1255 630L1243 670L1260 700L1280 685L1270 720M18 30L45 28M18 55L50 58M40 690L10 720M605 690L760 695M1430 690L1465 720"/>
      </g>
    </g>
  </defs>
</svg>

<div class="app">
  <header class="titlebar"></header>
  <main class="chat">
    <svg class="wallpaper" viewBox="0 10 1552 1050" width="1552" height="1050" aria-hidden="true">
      <use href="#tile"/><use href="#tile" x="-740"/><use href="#tile" x="-1480"/><use href="#tileHead" x="740"/>
    </svg>

    <section class="messages">
      <div class="sent">
        <span class="sent-text">北京</span>
        <span class="sent-time">09:47</span>
        <svg class="ticks" viewBox="0 0 34 20" width="34" height="20"><path d="M2 12L8 18L22 2M15 17L16 18L31 2"/></svg>
        <svg class="tail" viewBox="0 0 14 34" width="14" height="34"><path d="M0 0Q1 24 13 31Q15 34 9 34H0Z"/></svg>
      </div>

      <article class="received">
        <blockquote class="reply">
          <div class="reply-name">Search TGG</div>
          <div class="reply-text">北京</div>
        </blockquote>
        <p class="headline"><svg class="emoji"><use href="#fire"/></svg><a>真人外围楼风约炮交友修车</a><svg class="emoji"><use href="#fire"/></svg></p>
        <ol class="results">
          <li>1. <a>北京<svg class="emoji pale"><use href="#fist"/></svg>出<svg class="emoji dark"><use href="#fist"/></svg>鸡 -182.1k人</a></li>
          <li>2. <a>北京外围/北京上门/北京... -174.5k人</a></li>
          <li>3. <a>北京 外 围 中 圈 -117.7k人</a></li>
          <li>4. <a>北京外围 北京修车 北京... -114.6k人</a></li>
          <li>5. <a>德国服务器 英国服务器 ... -110.5k人</a></li>
          <li>6. <a>北京 <svg class="emoji gold"><use href="#fist"/></svg> <i>[</i>茶<i>]</i><svg class="emoji gold"><use href="#fist"/></svg> -80.7k人</a></li>
          <li>7. <a>北京 外 围 极 品 -64.0k人</a></li>
          <li>8. <a>北京<svg class="emoji"><use href="#lips"/></svg>约 -55.6k人</a></li>
          <li>9. <a><svg class="emoji"><use href="#medal"/></svg>北京<i>[</i>外围<i>]</i> -53.2k人</a></li>
          <li>10. <a>北京<svg class="emoji"><use href="#lips"/></svg>妹 妹 -48.2k人</a></li>
          <li>11. <a>北京外围 -45.1k人</a></li>
          <li>12. <a>北京 工 作 室 中 圈 -44.1k人</a></li>
          <li>13. <a>北京<svg class="emoji"><use href="#lips"/></svg>小 妹 -38.9k人</a></li>
          <li>14. <a>北京外围/北京修车/北京... -38.4k人</a></li>
          <li>15. <a>上海修车 上海外围 北京... -36.7k人</a></li>
          <li>16. <a>北京<svg class="emoji"><use href="#lips"/></svg> 莞 式 水 汇 -33.4k人</a></li>
          <li>17. <a>北京修车大队 -33.2k人</a></li>
          <li>18. <a>北京<svg class="emoji"><use href="#lips"/></svg>上 门 -33.1k人</a></li>
          <li>19. <a>北京 外 围 模 特 -32.8k人</a></li>
        </ol>
      </article>
    </section>

    <div class="composer"></div>
    <div class="send"></div>
    <div class="scroll-down">
      <svg viewBox="0 0 36 36" width="36" height="36"><path d="M18 4V33M4 19L18 33L32 19"/></svg>
    </div>
  </main>
</div>
</body>
</html>
```
FILE: styles.css
```css
* { box-sizing: border-box; }

body {
  margin: 0;
  width: 1552px;
  height: 1060px;
  overflow: hidden;
  background: #fdfdfd;
  color: #000;
  font-family: Roboto, "Noto Sans CJK SC", sans-serif;
  font-size: 32px;
}

.defs { position: absolute; }

.app {
  display: flex;
  flex-direction: column;
  height: 1060px;
}

.titlebar {
  flex: none;
  height: 10px;
  background: #fdfdfd;
}

.chat {
  position: relative;
  flex: 1;
  overflow: hidden;
  background:
    linear-gradient(rgba(60, 100, 50, .2), rgba(60, 100, 50, 0) 8px),
    radial-gradient(ellipse 340px 520px at -20px 560px, #cbd689 0, rgba(203, 214, 137, .9) 45%, rgba(203, 214, 137, 0) 100%),
    radial-gradient(ellipse 460px 480px at 0 1050px, rgba(175, 201, 135, 1), rgba(175, 201, 135, 0)),
    radial-gradient(ellipse 560px 520px at 1552px 420px, #ced8b2 0, rgba(206, 216, 178, .85) 50%, rgba(206, 216, 178, 0) 100%),
    linear-gradient(#98c28c 0, #a0c894 12%, #abd09e 26%, #c0d4a8 46%, #b7cfa5 60%, #a0c596 80%, #84b58b 100%);
}

.wallpaper {
  position: absolute;
  inset: 0;
  fill: none;
  stroke: rgba(70, 125, 60, .23);
  stroke-width: 3.8;
  stroke-linejoin: round;
  stroke-linecap: round;
}

.messages {
  position: relative;
  display: flex;
  flex-direction: column;
  height: 1036px;
  padding: 11px 82px 0 66px;
  gap: 16px;
  overflow: hidden;
}

.sent {
  position: relative;
  align-self: flex-end;
  display: flex;
  flex: none;
  width: 202px;
  height: 65px;
  padding-left: 21px;
  border-radius: 24px 24px 0 24px;
  background: #ebf7ee;
  box-shadow: 0 2px 3px rgba(70, 110, 60, .18);
}

.sent-text { line-height: 63px; }

.sent-time {
  margin: 31px 0 0 7px;
  font-size: 24px;
  line-height: 28px;
  color: #62b65f;
}

.ticks {
  margin: 35px 0 0 4px;
  fill: none;
  stroke: #4fae4e;
  stroke-width: 2.6;
  stroke-linecap: round;
}

.tail {
  position: absolute;
  right: -13px;
  bottom: 0;
  fill: #ebf7ee;
}

.received {
  flex: none;
  width: 960px;
  padding: 20px 20px 0;
  border-radius: 26px 26px 0 0;
  background: #fff;
}

.reply {
  position: relative;
  height: 64px;
  margin: 0 0 8px;
  padding-left: 20px;
}

.reply::before {
  content: "";
  position: absolute;
  left: 0;
  top: 0;
  width: 4px;
  height: 64px;
  border-radius: 2px;
  background: #3f8fe6;
}

.reply-name {
  height: 30px;
  font-size: 28px;
  font-weight: 500;
  line-height: 24px;
  color: #4891d9;
}

.reply-text {
  font-size: 28px;
  line-height: 38px;
}

.headline,
.results li {
  display: flex;
  height: 42px;
  line-height: 42px;
  white-space: pre;
}

.headline { margin: 0 0 42px; }

.results {
  margin: 0;
  padding: 0;
  list-style: none;
}

a {
  color: #1b4a8c;
  background: linear-gradient(#164a87, #164a87) 0 34px / 100% 3px no-repeat;
}

a i {
  font-style: normal;
  display: inline-block;
  height: 42px;
  vertical-align: top;
  background: #fff;
}

.emoji {
  display: inline-block;
  width: 32px;
  height: 32px;
  margin-top: 4px;
  vertical-align: top;
}

.fist-line {
  fill: none;
  stroke: rgba(130, 50, 10, .35);
  stroke-width: 1.2;
}

.pale { color: #f9d3bd; }
.dark { color: #834725; }
.gold { color: #fbbb16; }

.composer {
  position: absolute;
  left: 66px;
  top: 1044px;
  width: 1280px;
  height: 96px;
  border-radius: 30px;
  background: #fff;
}

.send {
  position: absolute;
  left: 1362px;
  top: 1044px;
  width: 108px;
  height: 108px;
  border-radius: 50%;
  background: #338ae6;
}

.scroll-down {
  position: absolute;
  left: 1362px;
  top: 916px;
  display: grid;
  place-items: center;
  width: 108px;
  height: 108px;
  border-radius: 50%;
  background: #fff;
  box-shadow: 0 1px 6px rgba(50, 90, 50, .25);
}

.scroll-down svg {
  fill: none;
  stroke: #707070;
  stroke-width: 4;
  stroke-linecap: round;
  stroke-linejoin: round;
}
```
